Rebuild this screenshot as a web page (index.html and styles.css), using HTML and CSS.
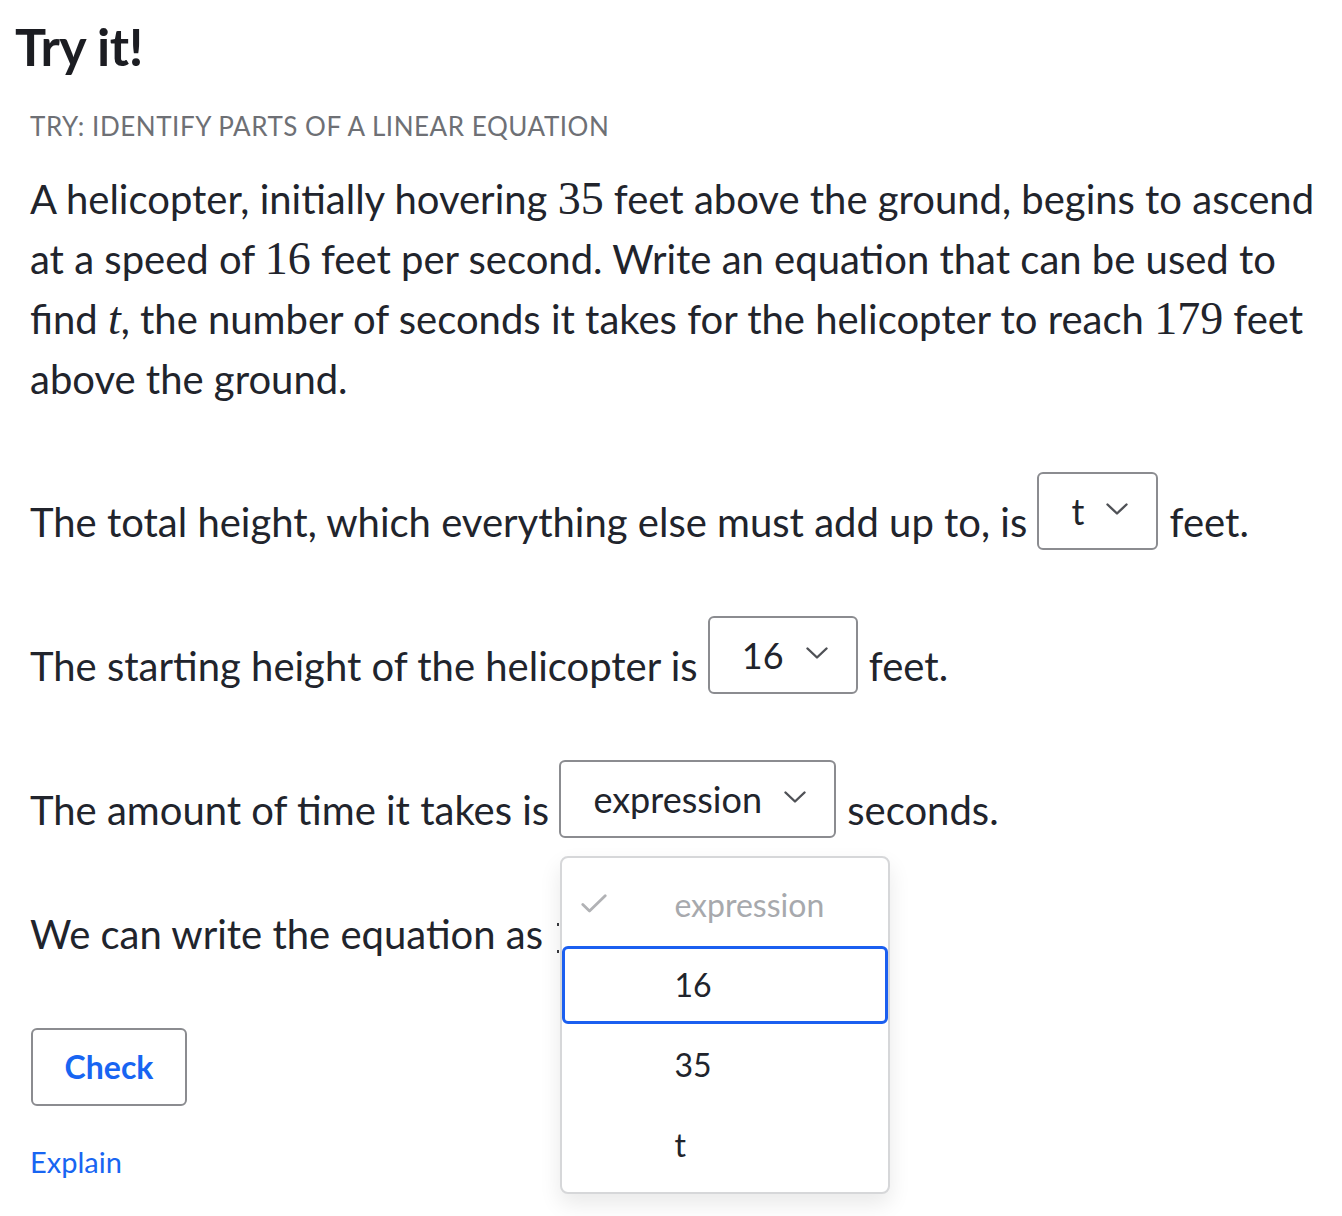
FILE: index.html
```html
<!DOCTYPE html>
<html lang="en">
<head>
<meta charset="utf-8">
<title>Try it!</title>
<link rel="stylesheet" href="styles.css">
</head>
<body>
<main class="page">
  <h1 class="title">Try it!</h1>
  <section class="exercise">
    <h2 class="kicker">TRY: IDENTIFY PARTS OF A LINEAR EQUATION</h2>
    <p class="prompt">A helicopter, initially hovering <span class="math">35</span> feet above the ground, begins to ascend at a speed of <span class="math">16</span> feet per second. Write an equation that can be used to find <span class="math var">t</span>, the number of seconds it takes for the helicopter to reach <span class="math">179</span> feet above the ground.</p>

    <div class="rows">
      <div class="row">The total height, which everything else must add up to, is <span class="select"><span class="select-value">t</span><svg class="chev" viewBox="0 0 22 12" width="22" height="12"><path d="M1.5 1.5 L11 10.5 L20.5 1.5" fill="none" stroke="#4f5156" stroke-width="2.4" stroke-linecap="round" stroke-linejoin="round"/></svg></span> feet.</div>

      <div class="row">The starting height of the helicopter is <span class="select"><span class="select-value">16</span><svg class="chev" viewBox="0 0 22 12" width="22" height="12"><path d="M1.5 1.5 L11 10.5 L20.5 1.5" fill="none" stroke="#4f5156" stroke-width="2.4" stroke-linecap="round" stroke-linejoin="round"/></svg></span> feet.</div>

      <div class="row">The amount of time it takes is <span class="select open"><span class="select-value">expression</span><svg class="chev" viewBox="0 0 22 12" width="22" height="12"><path d="M1.5 1.5 L11 10.5 L20.5 1.5" fill="none" stroke="#4f5156" stroke-width="2.4" stroke-linecap="round" stroke-linejoin="round"/></svg>
        <span class="menu">
          <span class="option disabled"><span class="opt-icon"><svg viewBox="0 0 26 20" width="26" height="20"><path d="M1.8 10.5 L8.5 17 L24.2 1.8" fill="none" stroke="#b1b2b5" stroke-width="2.8" stroke-linecap="round" stroke-linejoin="round"/></svg></span><span class="opt-label">expression</span></span>
          <span class="option focused"><span class="opt-icon"></span><span class="opt-label">16</span></span>
          <span class="option"><span class="opt-icon"></span><span class="opt-label">35</span></span>
          <span class="option"><span class="opt-icon"></span><span class="opt-label">t</span></span>
        </span>
      </span> seconds.</div>

      <div class="row row-eq">We can write the equation as <span class="math-input"></span></div>

      <div class="actions">
        <button class="check-btn" type="button">Check</button>
      </div>
    </div>

    <a class="explain" href="#">Explain</a>
  </section>
</main>
</body>
</html>
```

FILE: styles.css
```css
* { box-sizing: border-box; }

html, body {
  margin: 0;
  padding: 0;
  background: #ffffff;
}

body {
  font-family: Lato, "Noto Sans", sans-serif;
  color: #21242c;
}

.page {
  min-height: 1216px;
  padding: 15px 12px 0 15px;
}

.title {
  margin: 0;
  font-size: 52px;
  line-height: 1.2;
  font-weight: 700;
  color: #1c1d22;
  letter-spacing: -0.5px;
}

.exercise {
  padding-left: 15px;
}

.kicker {
  margin: 31px 0 0;
  font-size: 26px;
  line-height: 36px;
  font-weight: 400;
  color: #6e7075;
  letter-spacing: 0.55px;
}

.prompt {
  margin: 25px 0 0;
  font-size: 40px;
  line-height: 60px;
}

.math {
  font-family: "Liberation Serif", "DejaVu Serif", serif;
  font-size: 46px;
  line-height: 1;
}

.var {
  font-style: italic;
}

.rows {
  margin-top: 63px;
  display: flex;
  flex-direction: column;
  gap: 63.5px;
}

.row {
  font-size: 40px;
  line-height: 60px;
}

.select {
  position: relative;
  display: inline-flex;
  align-items: center;
  gap: 22px;
  height: 78px;
  padding: 0 28px 0 32px;
  border: 2px solid #8b8c90;
  border-radius: 6px;
  background: #fff;
  vertical-align: 13px;
  line-height: 1.2;
  margin: 0 1px 0 0;
}

.select-value {
  font-size: 36px;
  line-height: 1.2;
}

.chev {
  display: block;
  flex: none;
  margin-top: -4px;
}

.menu {
  position: absolute;
  top: calc(100% + 20px);
  left: -1px;
  width: 330px;
  padding: 7px 0;
  display: flex;
  flex-direction: column;
  background: #fff;
  border: 2px solid #d6d7d9;
  border-radius: 8px;
  box-shadow: 0 10px 22px rgba(0, 0, 0, 0.09);
  z-index: 5;
}

.option {
  display: flex;
  align-items: center;
  height: 78px;
  margin: 1px 0;
  padding-left: 16px;
  border: 3px solid transparent;
  border-radius: 6px;
  font-size: 32px;
  line-height: 1.2;
  color: #21242c;
}

.option.focused {
  border-color: #1b5ff0;
}

.option.disabled {
  color: #a7a9ad;
}

.opt-icon {
  display: flex;
  align-items: center;
  width: 26px;
  height: 20px;
  margin-right: 67px;
  margin-top: -2px;
}

.opt-icon svg { display: block; }

.math-input {
  display: inline-block;
  width: 2px;
  height: 30px;
  margin-left: 4px;
  vertical-align: -4px;
  background: repeating-linear-gradient(to bottom, #3a3b40 0 3px, transparent 3px 27px);
}

.actions {
  display: flex;
}

.check-btn {
  width: 156px;
  height: 78px;
  margin-left: 1px;
  border: 2px solid #8b8c90;
  border-radius: 6px;
  background: #fff;
  font-family: Lato, "Noto Sans", sans-serif;
  font-size: 32px;
  font-weight: 700;
  color: #1865f2;
  padding: 0;
}

.explain {
  display: inline-block;
  margin-top: 35px;
  font-size: 29px;
  line-height: 42px;
  color: #1865f2;
  text-decoration: none;
}
```
